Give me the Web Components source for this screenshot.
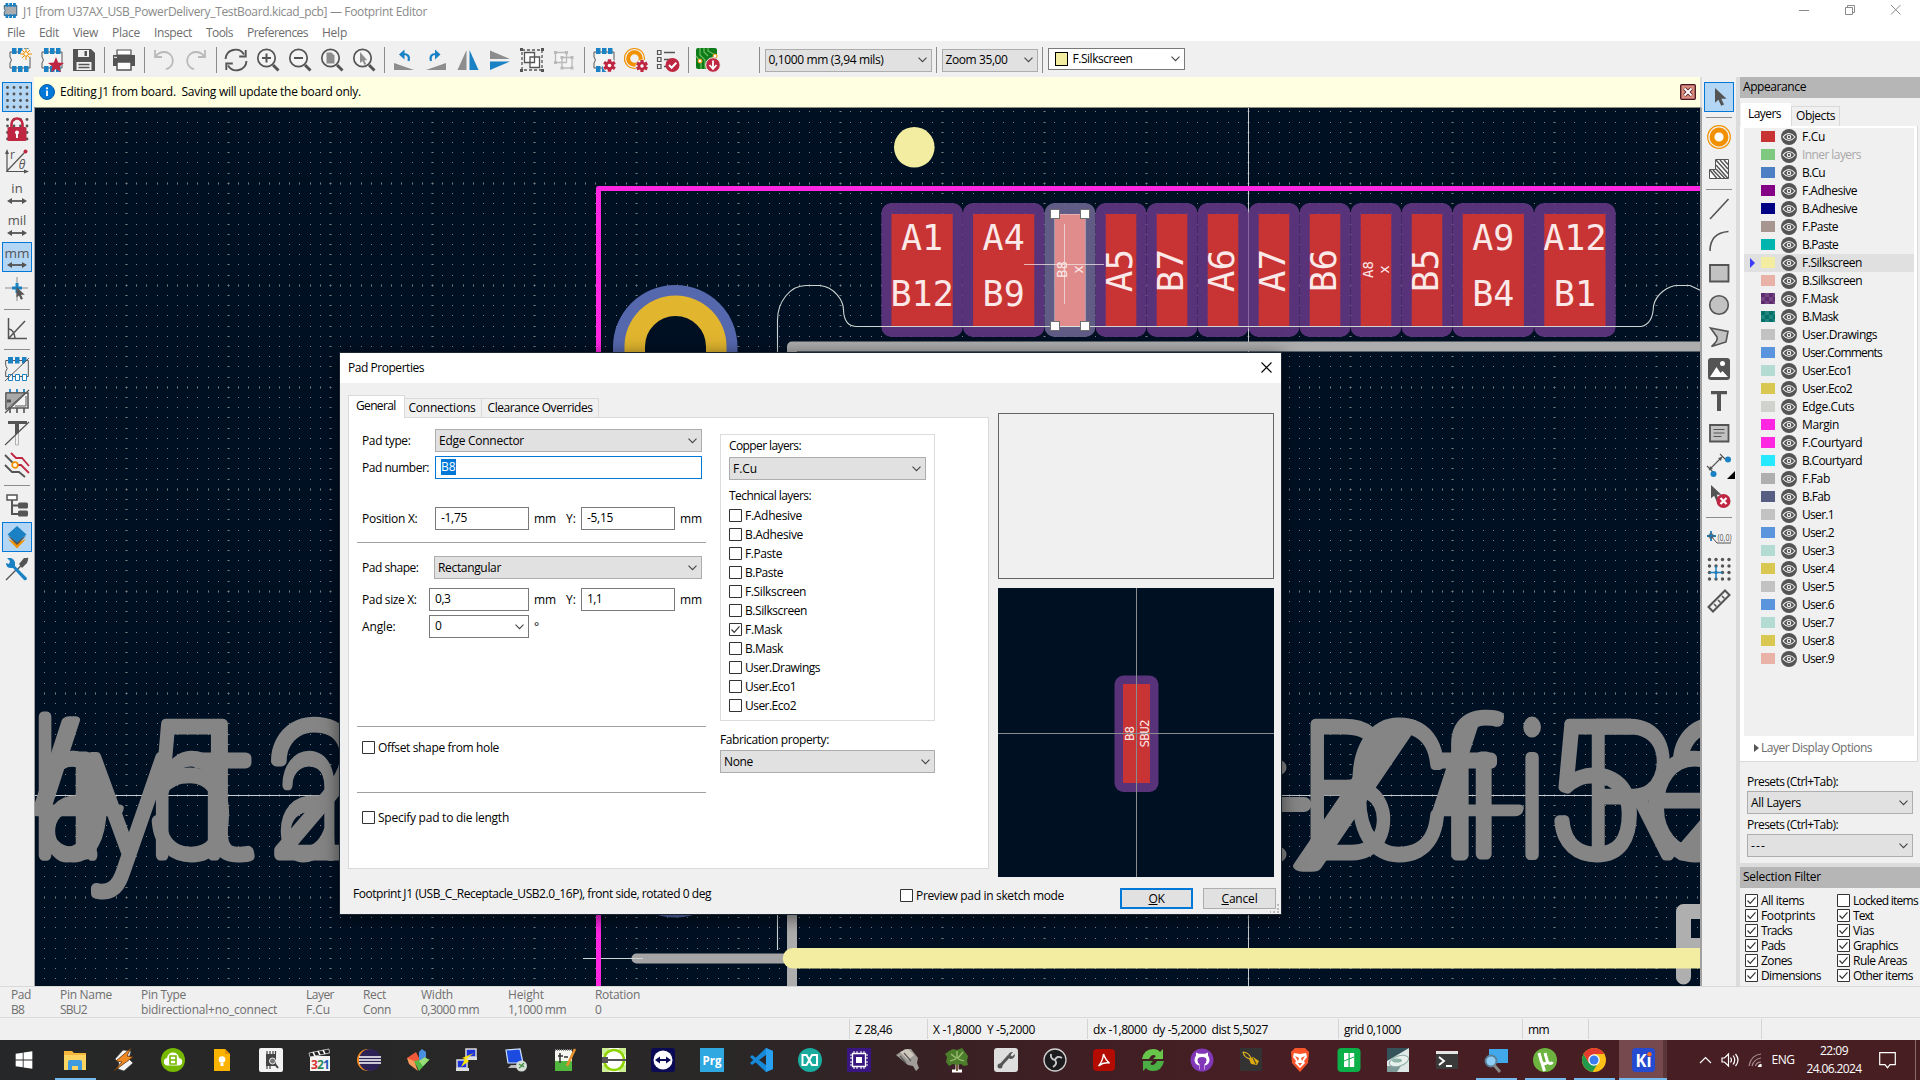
<!DOCTYPE html>
<html lang="en">
<head>
<meta charset="utf-8">
<title>Footprint Editor</title>
<style>
html,body{margin:0;height:100%;overflow:hidden;background:#f0f0f0}
body{font:12px/16px "Open Sans","Noto Sans",sans-serif;color:#000}
</style>
</head>
<body>
<fp-app></fp-app>
<script>
const el=(name,css,html,init)=>customElements.define(name,class extends HTMLElement{
  constructor(){super();this.attachShadow({mode:'open'})}
  connectedCallback(){
    if(this.done)return;this.done=true;
    this.shadowRoot.innerHTML='<style>*{box-sizing:border-box}'+css+'</style>'+(typeof html==='function'?html(this):html);
    if(init)init(this);
  }
});
const G='#545454',B='#1a81c4',R='#bf2641',O='#f29100';
const gear=(x,y,s=1)=>`<g transform="translate(${x} ${y}) scale(${s})"><path d="M0-6V6M-5.2-3L5.2 3M-5.2 3L5.2-3" stroke="${R}" stroke-width="3.2"/><circle r="4.3" fill="${R}"/><circle r="1.7" fill="#fff"/></g>`;
const chip=`<path d="M2 4h20v16H2v-5q3-3 0-6z" fill="#f4f4f4" stroke="${G}"/><path d="M4 0h4.500v6H4zM10 0h4.500v6H10zM16 0h4.500v6H16zM4 18h4.500v6H4zM10 18h4.500v6H10zM16 18h4.500v6H16z" fill="${B}"/>`;
const mag=i=>`<circle cx="10.500" cy="10" r="8.700" fill="#f4f4f4" stroke="${G}" stroke-width="1.700"/><path d="M17 17l5.500 5.500" stroke="${G}" stroke-width="3"/>${i}`;
const arr=`<path d="M5 20h14" stroke="${G}" stroke-width="1.800"/><path d="M2 20l5-3v6zM22 20l-5-3v6z" fill="${G}"/>`;
const dots=(r=1.4)=>{let s='';for(const y of[2.500,9,15.500,22])for(const x of[2.500,9,15.500,22])s+=`<circle cx="${x}" cy="${y}" r="${r}"/>`;return`<g fill="${G}">${s}</g>`};
const cur=(x,y,s)=>`<path transform="translate(${x} ${y}) scale(${s})" d="M0 0v14l3.300-2.800 2.600 5.800 2.700-1.200-2.600-5.600H11z" fill="${G}"/>`;
const T=(x,y,s,t,f='#545454',w=400,extra='')=>`<text x="${x}" y="${y}" font-size="${s}" fill="${f}" font-weight="${w}" text-anchor="middle" font-family="Open Sans,sans-serif" ${extra}>${t}</text>`;
const I={
newfp:chip+`<circle cx="18" cy="6" r="5.500" fill="#f0f0f0"/><path d="M18 0v12M12 6h12M14 2l8 8M22 2l-8 8" stroke="${O}" stroke-width="1"/><circle cx="18" cy="6" r="2.200" fill="#fff" stroke="${O}"/>`,
lib:chip+`<path d="M16 9l2.200 5.500 5.800.4-4.500 3.700 1.500 5.700-5-3.200-5 3.200 1.500-5.700L8 14.900l5.800-.4z" fill="${R}"/>`,
save:`<path d="M1 1h18l4 4v18H1z" fill="${G}"/><path d="M6 2h11v7H6zM4.500 14h15v8h-15z" fill="#f0f0f0"/><path d="M12.500 3h2.500v5h-2.500z" fill="${G}"/><path d="M6.500 16.500h11M6.500 19.500h11" stroke="${G}" stroke-width="1.300"/>`,
print:`<path d="M5 2h14v5H5z" fill="#fff" stroke="${G}" stroke-width="1.200"/><path d="M1 7h22v11H1z" fill="${G}"/><path d="M5 14h14v8H5z" fill="#fff" stroke="${G}" stroke-width="1.500"/><path d="M2 9.300h3" stroke="#fff"/>`,
undo:`<path d="M3 2v7h7M3.500 8.500Q7 4 12 4a8.700 8.700 0 0 1 2 17.200" fill="none" stroke="#b9b9b9" stroke-width="1.800"/>`,
redo:`<path d="M21 2v7h-7M20.500 8.500Q17 4 12 4a8.700 8.700 0 0 0-2 17.200" fill="none" stroke="#b9b9b9" stroke-width="1.800"/>`,
refresh:`<path d="M1.500 11A10 10 0 0 1 20 6.500M22.500 13A10 10 0 0 1 4 17.500" fill="none" stroke="${G}" stroke-width="1.900"/><path d="M21.700 2v6.500h-6.500M2.300 22v-6.500h6.500" fill="none" stroke="${G}" stroke-width="1.900"/>`,
zin:mag(`<path d="M10.500 5.500v9M6 10h9" stroke="${G}" stroke-width="2"/>`),
zout:mag(`<path d="M6 10h9" stroke="${G}" stroke-width="2"/>`),
zfit:mag(`<path d="M6.500 4.500h5l3 3v8h-8z" fill="#8d8d8d"/>`),
zsel:mag(`<path d="M8 4v11l2.500-2 2 4 1.700-1-2-3.700h3z" fill="#8d8d8d"/>`),
rotl:`<path d="M2 15l20 7H2z" fill="#8d8d8d"/><path d="M16.500 13Q18.500 6 11 6" fill="none" stroke="${B}" stroke-width="2.200"/><path d="M7 6.500l5.500-5v10z" fill="${B}"/>`,
rotr:`<path d="M22 15L2 22h20z" fill="#8d8d8d"/><path d="M7 13Q5 6 12 6" fill="none" stroke="${B}" stroke-width="2.200"/><path d="M16.500 6.500l-5.500-5v10z" fill="${B}"/>`,
mirh:`<path d="M10.500 2v20H1.500z" fill="#8d8d8d"/><path d="M13.500 2v20h9z" fill="${B}"/>`,
mirv:`<path d="M2 2.500v8.500h20z" fill="#8d8d8d"/><path d="M2 13.500v8.500l20-8.500z" fill="${B}"/>`,
grp:`<path d="M2 2h20v20H2z" fill="none" stroke="${G}" stroke-width="1.300" stroke-dasharray="3 2"/><path d="M4.500 4.500h10v10h-10zM10 9h9.500v10.500H10z" fill="#fff" stroke="${G}" stroke-width="1.300"/><path d="M0 0h3v3H0zM21 0h3v3h-3zM0 21h3v3H0zM21 21h3v3h-3z" fill="${G}"/>`,
ungrp:`<path d="M3.500 4.500h11v10h-11zM10 9.500h10v10.500H10z" fill="#f4f4f4" stroke="#b9b9b9" stroke-width="1.300"/><path d="M2 3h3v3H2zM13 3h3v3h-3zM2 13h3v3H2zM8.500 8h3v3h-3zM18.500 8h3v3h-3zM8.500 18.500h3v3h-3zM18.500 18.500h3v3h-3z" fill="#b9b9b9"/>`,
fpprop:chip+`<circle cx="17.500" cy="17.500" r="7" fill="#f0f0f0"/>`+gear(17.500,17.500,1.050),
padprop:`<circle cx="10.500" cy="10.500" r="10" fill="none" stroke="${O}" stroke-width="1.200"/><circle cx="10.500" cy="10.500" r="6.300" fill="none" stroke="${O}" stroke-width="4"/><circle cx="18" cy="18" r="6.500" fill="#f0f0f0"/>`+gear(18,18),
drc:`<path d="M1.500 2.500h3.500v4H1.500zM1.500 9.500h3.500v4H1.500zM1.500 16.500h3.500v4H1.500z" fill="none" stroke="${G}" stroke-width="1.200"/><path d="M8 4.500h11M8 11.500h7M8 18.500h2" stroke="${G}" stroke-width="1.300"/><circle cx="16.500" cy="17" r="7" fill="${R}"/><path d="M13 17l2.600 2.700 4.700-5" fill="none" stroke="#fff" stroke-width="2"/>`,
pcb:`<rect x="0" y="0" width="21" height="21" rx="2" fill="#0e7b1b"/><path d="M4 0v7l5 5v9M8 0v4l4 4M12 0v3l9 5M0 8l5 6v7" fill="none" stroke="#6cbf5b" stroke-width="1.200"/><circle cx="4" cy="13" r="2" fill="#fff" stroke="${O}"/><circle cx="19" cy="8" r="2" fill="#fff" stroke="${O}"/><circle cx="17" cy="17" r="7.300" fill="${R}" stroke="#f0f0f0"/><path d="M17 12.500v8M13.500 17l3.500 4 3.500-4" fill="none" stroke="#fff" stroke-width="1.800"/>`,
grid:dots(),
lock:dots()+`<path d="M6.500 13V7a5.500 5.500 0 0 1 11 0v6" fill="none" stroke="${R}" stroke-width="2.600"/><rect x="2.500" y="10" width="19" height="14" rx="1.500" fill="${R}"/><circle cx="12" cy="15.500" r="2" fill="#fff"/><path d="M12 16v5" stroke="#fff" stroke-width="2"/>`,
polar:`<path d="M2 23V3M1 22.500h21M2 22L20 3" fill="none" stroke="${G}" stroke-width="1.200"/><path d="M2 0L0 5h4zM24 22.500l-5-2v4z" fill="${G}"/><circle cx="20.500" cy="2.500" r="2" fill="${R}"/>`+T(7.500,10,12,'r')+T(17,19.500,12,'θ','#545454',400,'font-style="italic"'),
in:T(12,12,13,'in')+arr, mil:T(12,12,13,'mil')+arr, mm:T(12,13,13.500,'mm')+arr,
full:`<path d="M12 0v24M0 11h23" stroke="#8d8d8d" stroke-width="1"/><path d="M12 6v10M7 11h10" stroke="${B}" stroke-width="3"/>`+cur(11.500,10,.75),
ang:`<path d="M3.500 1v20.500H22M4 21L20 4M4 12q5 1 6 9" fill="none" stroke="${G}" stroke-width="1.500"/>`,
padsk:`<path d="M.7 3.500h22.600v16H.7v-5q3-3 0-6z" fill="none" stroke="${G}"/><path d="M3 0h5v6.500H3zM10 0h4.500v6.500H10zM17 0h4.500v4L19 6.500h-2z" fill="${B}"/><path d="M3.500 17.500h4v6h-4zM10.500 17.500h4v6h-4zM17.500 17.500h4v6h-4z" fill="#fff" stroke="${B}"/><path d="M0 24L24 1" stroke="${G}"/>`,
gfxsk:`<path d="M5 0v5M12 0v5M19 0v5" stroke="${B}" stroke-width="1.800"/><path d="M5 19v5M12 19v5M19 19v5" stroke="${G}" stroke-width="1.600"/><path d="M1 4h22v15H1z" fill="#f4f4f4" stroke="${G}" stroke-width="1.500"/><path d="M1 4h19L1 21z" fill="#a9a9a9" stroke="${G}"/><path d="M2 10.500h4v3H2z" fill="${G}"/><path d="M10 17h11V7" fill="none" stroke="${G}"/><path d="M0 24L24 1" stroke="${G}" stroke-width="1.200"/>`,
txtsk:`<path d="M10.500 12v12h3V10" fill="none" stroke="#b0b0b0"/><path d="M3 0h19v3h-8v8l-4 3V3H3z" fill="${G}"/><path d="M0 24L24 1" stroke="${G}" stroke-width="1.200"/>`,
contrast:`<path d="M0 2l8 8M0 12l7 7h7l6 5" fill="none" stroke="${G}" stroke-width="1.800"/><path d="M6 0l5 5h6l7 8M12 12h4l8 8" fill="none" stroke="${R}" stroke-width="1.800"/><circle cx="10" cy="12" r="2.800" fill="#fff" stroke="${O}" stroke-width="1.700"/>`,
tree:`<path d="M2 2h10v5H2z" fill="#fff" stroke="${G}" stroke-width="1.500"/><path d="M7 7v14h7M7 12.500h7" fill="none" stroke="${G}" stroke-width="2"/><rect x="13" y="9.500" width="10" height="6" rx="1.500" fill="${G}"/><rect x="13" y="17.500" width="10" height="6" rx="1.500" fill="${G}"/>`,
layers:`<path d="M3 14l9 9.500 9-9.500-9 4z" fill="${O}"/><path d="M3 11l9 9 9-9-9 4z" fill="${G}"/><path d="M12 1l9.500 8.500-9.500 8-9.500-8z" fill="${B}"/>`,
tools:`<path d="M23 1L12 13M12 12L1 23" stroke="${G}" stroke-width="1.400"/><path d="M14 7l5-6h3l1 2-1 3-5 5z" fill="${G}"/><path d="M2 1l3 3-1 3-3-1q0 5 5 5h2l11 12q3 1 3-2L10 9q1-6-4-8z" fill="${B}"/>`,
arrow:cur(8,3,1.050),
pad:`<circle cx="12" cy="12" r="11.300" fill="none" stroke="${O}" stroke-width="1.200"/><circle cx="12" cy="12" r="7" fill="#fff" stroke="${O}" stroke-width="4.800"/>`,
hatch:`<path d="M8.500 2.500h13v19H2.500v-9h6z" fill="#fff" stroke="${G}"/><path d="M9 3l12.500 14M9 8l12 13.500M13 3l8 9M17 3l4.500 5M3 13l7 8.500M6 13l8 8.500M9 12l9 9.500" stroke="${G}" stroke-width="1.500"/>`,
line:`<path d="M3 22L21.500 2" stroke="${G}" stroke-width="1.600"/>`,
arc:`<path d="M3 22Q3 4 21.500 2.500" fill="none" stroke="${G}" stroke-width="1.600"/>`,
rect:`<path d="M3 4h18.500v16.500H3z" fill="#c2c2c2" stroke="${G}" stroke-width="1.800"/>`,
circ:`<circle cx="12" cy="12" r="9.300" fill="#c2c2c2" stroke="${G}" stroke-width="1.600"/>`,
poly:`<path d="M3.500 3l17.500 3.500-2 10.500L4.500 21.500q7-6 5.500-9.500z" fill="#c2c2c2" stroke="${G}" stroke-width="1.600"/>`,
img:`<rect x="1" y="1" width="22" height="22" rx="3" fill="${G}"/><path d="M3 20l6.500-10 4 6 2-2 5.500 6z" fill="#fff"/><circle cx="15.500" cy="6.500" r="2.500" fill="#fff"/>`,
txt:`<path d="M4 2h16v3.200h-6V22h-4V5.200H4z" fill="${G}"/>`,
tbox:`<path d="M3 4h18.500v16.500H3z" fill="#c2c2c2" stroke="${G}" stroke-width="1.800"/><path d="M6.500 8.500h11M6.500 12h11M6.500 15.500h8" stroke="${G}" stroke-width="1.200"/>`,
dim:`<path d="M2 17L15 4M0 13l7 7M13 1l7 7" stroke="${G}" stroke-width="1.100"/><path d="M15 4l-4 1 3 3zM2 17l4-1-3-3z" fill="${G}"/><circle cx="21" cy="6.500" r="3" fill="${B}"/><circle cx="6.500" cy="21" r="3" fill="${B}"/>`,
del:cur(4,0,.95)+`<circle cx="16.500" cy="16" r="7" fill="${R}"/><path d="M13.500 13l6 6M19.500 13l-6 6" stroke="#fff" stroke-width="2.200"/>`,
orig:`<path d="M4 6v10M0 11h9" stroke="${B}" stroke-width="1.800"/><path d="M4 11l6 7h14" fill="none" stroke="${G}"/><circle cx="4" cy="11" r="2.300" fill="none" stroke="${G}"/>`+T(17.5,15.500,9,'(0,0)','#545454',400,'textLength="14" lengthAdjust="spacingAndGlyphs"'),
gorig:dots(1.700)+`<path d="M9 9v13M2.500 15.500h13" stroke="${B}" stroke-width="1.500"/>`,
ruler:`<path d="M1.500 18L18 1.500 22.500 6 6 22.500z" fill="none" stroke="${G}" stroke-width="2"/><path d="M7 15l2.500 2.500M11 11l2.500 2.500M15 7l2.500 2.500" stroke="${G}" stroke-width="1.500"/>`,
app:`<path d="M2 4h20v16H2v-5q3-3 0-6z" fill="#a9adb0" stroke="#2b5876" stroke-width="1.500"/><path d="M4 0h4.500v6H4zM10 0h4.500v6H10zM16 0h4.500v6H16zM4 18h4.500v6H4zM10 18h4.500v6H10zM16 18h4.500v6H16z" fill="${B}"/>`,
eye:`<circle cx="12" cy="12" r="12" fill="${G}"/><path d="M3 12q9-10.500 18 0q-9 10.500-18 0z" fill="none" stroke="#f4f4f4" stroke-width="1.700"/><circle cx="12" cy="12" r="2.600" fill="none" stroke="#f4f4f4" stroke-width="1.700"/>`,
/* taskbar */
win:`<path d="M2 4.500l8.500-1.200v8.200H2zM11.500 3.100L22 1.500v10H11.500zM2 12.500h8.500v8.200L2 19.500zM11.500 12.500H22v10l-10.500-1.600z" fill="#fff"/>`,
expl:`<path d="M1 3h8l2 2h12v17H1z" fill="#f2b73b"/><path d="M1 7h22v15H1z" fill="#fcd462"/><path d="M5 22v-8q0-2 2-2h10q2 0 2 2v8h-4v-4H9v4z" fill="#3f9be0"/>`,
winamp:`<path d="M11 2l8 1-2 8 4 4-9 8-6-2 1-6-4-4z" fill="#f4f4f4" stroke="#333" stroke-width=".6"/><path d="M19 0L4 13l6 1-8 9L21 9l-6-1z" fill="#f08a24" stroke="#5a3510" stroke-width=".8"/>`,
cloud:`<circle cx="12" cy="12" r="12" fill="#76b900"/><path d="M6 17.500a3.800 3.800 0 0 1 0-7.500q1-5.500 6-5.500t6 5.500a3.800 3.800 0 0 1 0 7.500z" fill="#fff"/><path d="M9 8h6v8H9zM9 12h6" fill="none" stroke="#76b900" stroke-width="1.600"/>`,
keep:`<path d="M4 1h11l5 5v17H4z" fill="#fbb300"/><path d="M15 1l5 5h-5z" fill="#e09000"/><circle cx="12" cy="11.500" r="3.300" fill="#fff"/><path d="M10.500 15h3v3h-3z" fill="#fff"/>`,
chipq:`<rect width="24" height="24" rx="2" fill="#f3f3f3"/><path d="M7 6h10v12H7z" fill="#444"/><path d="M8 3v3M11 3v3M14 3v3M16.500 3v3M8 18v3M11 18v3" stroke="#444" stroke-width="1.200"/><circle cx="13.500" cy="13" r="3" fill="#777" stroke="#eee"/><path d="M16 16l3 4" stroke="#444" stroke-width="2"/>`,
mpc:`<path d="M2 8h20v15H2z" fill="#f4f4f4"/><path d="M1 5l20-4 .5 4L2 9z" fill="#222" stroke="#ddd" stroke-width=".8"/><path d="M5 4l2 4M10 3l2 4M15 2l2 4" stroke="#fff" stroke-width="1.600"/>`+T(6.500,20.500,12,'3','#d33',700)+T(12.500,20.500,12,'2','#2a8a5a',700)+T(18.500,20.500,12,'1','#235ab8',700),
eclipse:`<circle cx="11" cy="12" r="11" fill="#f58a1f"/><circle cx="13" cy="12" r="11" fill="#2c2255"/><path d="M2 9h22M2 12h22M2 15h22" stroke="#fff" stroke-width="1.500"/>`,
cube:`<path d="M1 10l9-6 4 8-6 6z" fill="#f1593a"/><path d="M13 4l3-3 4 3v5l-7 5z" fill="#4a90e2"/><path d="M1 10l7 3 4 10-9-7z" fill="#f79a5b"/><path d="M8 13l6-1 10-1-11 12z" fill="#58b947"/><path d="M13 13l6-4 4 3-6 6z" fill="#9bdc7a"/>`,
putty:`<path d="M11 1h10v8H11zM2 12h10v8H2z" fill="#1b33d8" stroke="#ddd" stroke-width="1.500"/><path d="M9 9h13v3H11zM1 20h13v3H1z" fill="#ddd"/><path d="M19 5l-8 6 3 2-8 6 4-8-3-1z" fill="#ffe600"/>`,
rdp:`<path d="M2 2l14-1 3 14H4z" fill="#1b4be0" stroke="#cfe0ff" stroke-width="1.200"/><path d="M7 17h10v3H4z" fill="#bbb"/><circle cx="17.500" cy="18" r="5.500" fill="#d7ded7"/><path d="M15 16l3 2-3 2M20 15l-2 2 2 2" fill="none" stroke="#3f8f3f" stroke-width="1.200"/>`,
npp:`<path d="M2 2h17v21H2z" fill="#f6f6f0"/><path d="M2 13h17v10H2z" fill="#4fb83d"/><path d="M2 2h17" stroke="#888" stroke-width="2" stroke-dasharray="1 1"/><path d="M5 8h5M7 5v10M11 9h4" stroke="#333" stroke-width="1.500"/><path d="M22 1l-8 17" stroke="#e8912d" stroke-width="2.500"/>`,
lime:`<path d="M0 0h24v24H0z" fill="#fff"/><path d="M0 0h7v7H0zM17 0h7v7h-7zM0 17h7v7H0zM17 17h7v7h-7z" fill="#9be22e" opacity=".5"/><circle cx="12" cy="12" r="10" fill="#fff" stroke="#8fd400" stroke-width="2.600"/><path d="M0 9h6v2h18v2H6v2H0z" fill="#555"/>`,
tv:`<rect width="24" height="24" rx="3" fill="#0a0a55"/><circle cx="12" cy="12" r="9.500" fill="#fff"/><path d="M4 12l5-3.500V11h6V8.500l5 3.500-5 3.500V13H9v2.500z" fill="#0a0a55"/>`,
prg:`<rect width="24" height="24" fill="#2fa7e0"/>`+T(12,16.500,12,'Prg','#fff',700,'textLength="19" lengthAdjust="spacingAndGlyphs"'),
vsc:`<path d="M17 0l7 3v18l-7 3L1 9l2-2 14 10V7L3 17l-2-2z" fill="#1689d8"/><path d="M17 0l7 3v18l-7 3z" fill="#2aa0f0"/>`,
lxi:`<circle cx="12" cy="12" r="12" fill="#1aab9f"/><path d="M4.500 7v10h4L14 7h5v10h-5L8.500 7z" stroke="#fff" stroke-width="2" fill="none"/>`,
cpu:`<rect width="24" height="24" fill="#3a1680"/><path d="M7 3v18M10 3v18M14 3v18M17 3v18M3 7h18M3 10h18M3 14h18M3 17h18" stroke="#fff" stroke-width="1"/><path d="M5.500 5.500h13v13h-13z" fill="#3a1680" stroke="#fff" stroke-width="1.300"/><path d="M9 9h6v6H9z" fill="#fff"/>`,
conn:`<path d="M0 7l9-6h6l7 9-1 5 2 5-3 3-3-5-5-1z" fill="#a09c98"/><path d="M4 4l8-3 6 6-6 5z" fill="#cfc8bd"/><path d="M4 8l6 7M8 5l7 8" stroke="#5f5f5f" stroke-width="1.300"/>`,
treei:`<path d="M12 23V12M7 23h10" stroke="#fff" stroke-width="3"/><path d="M12 23V12" stroke="#6b4a2a" stroke-width="1.800"/><path d="M4 3l4-2 4 1 5-2 3 4 3 4-1 5 1 4-4 1-3-2-4 1-4-1-4 2-3-4 1-5-2-3z" fill="#4c7d2b"/><path d="M6 6l5 4M18 4l-5 6M5 13l6-2M19 13l-6-2M12 3v8" stroke="#a0c274" stroke-width="1.300"/>`,
wrench:`<rect width="24" height="24" rx="3" fill="#dedede"/><path d="M6 18L15 8" stroke="#555" stroke-width="3"/><path d="M14 9q0-5 5-5l-2.500 3 1.500 1.500L21 6q0 5-5 5z" fill="#555"/><circle cx="6" cy="18" r="2.500" fill="#555"/>`,
obs:`<circle cx="12" cy="12" r="11" fill="#1c1c1e" stroke="#d0d0d0" stroke-width="1.300"/><path d="M12 12q-5-1-4-6M12 12q3 4-2 7M12 12q2-5 7-2" fill="none" stroke="#c9c9c9" stroke-width="1.900"/>`,
pdf:`<rect x="1" y="1" width="22" height="22" rx="4" fill="#b30b00"/><path d="M11.500 6q2 6 6 9-6-1-11 3 4-4 5-12z" fill="none" stroke="#fff" stroke-width="1.400"/>`,
sync:`<path d="M1 11Q3 1 12 1q5 0 7 3l3-3v10h-10l3-3q-4-3-7 3z" fill="#67c64a"/><path d="M23 13q-2 10-11 10-5 0-7-3l-3 3v-10h10l-3 3q4 3 7-3z" fill="#4aae45"/>`,
gh:`<circle cx="12" cy="12" r="11.500" fill="#8137b8"/><path d="M9 21.500v-4q-4-1-4.500-5 0-3 1.500-5V4.500l3 1.300h6l3-1.300v3q1.500 2 1.500 5-.5 4-4.500 5v4z" fill="#fff"/><path d="M9.500 22v-6q-2-1-2-4t4.500-3 4.500 3-2 4v6z" fill="#8137b8"/>`,
bee:`<rect x="1" width="22" height="23" fill="#333"/><path d="M4 4q7 1 8 7M4 4q1 6 8 7" fill="none" stroke="#e8b81e" stroke-width="1.200"/><path d="M10 11l4-2 6 4-2 4-6-1z" fill="#d9a90f"/><path d="M14 10l3 6" stroke="#333"/>`,
brave:`<path d="M7 0h10l4 4-1 11-8 9-8-9L3 4z" fill="#fb542b"/><path d="M6 5l6 1 6-1 1 4-3 4 1 2-5 5-5-5 1-2-3-4z" fill="#fff"/><path d="M7 8l4 2-1 3zM17 8l-4 2 1 3zM10 15h4l-2 3z" fill="#fb542b"/>`,
green:`<rect x=".5" width="23" height="24" rx="4" fill="#0bb049"/><path d="M7 5h4.500v14H7zM12.700 5h4.500v14h-4.500z" fill="#fff"/><path d="M7 13l10-4" stroke="#0bb049"/>`,
sat:`<path d="M1 0h22v24H1z" fill="#dfe8e6"/><path d="M1 0h22L1 13z" fill="#35535b"/><path d="M1 18h14l-4 6H1z" fill="#7d9a98"/><ellipse cx="13" cy="13" rx="10" ry="5" transform="rotate(-18 13 13)" fill="#e9f1ef" stroke="#8fada6"/><ellipse cx="11" cy="12.500" rx="5" ry="2" fill="#8fb5a8"/>`,
term:`<path d="M1 3h22v18H1z" fill="#3a3a3a"/><path d="M1 3h22v3H1z" fill="#e4e4e4"/><path d="M4 9l5 4-5 4M11 18h6" fill="none" stroke="#fff" stroke-width="1.900"/>`,
view:`<path d="M5 1h19v14H5z" fill="#41a8ec"/><circle cx="7" cy="13" r="5.500" fill="#8fcdf5" stroke="#5a7f96" stroke-width="1.800"/><path d="M10 17l6 7" stroke="#8a8a8a" stroke-width="2.800"/>`,
ut:`<circle cx="12" cy="12" r="12" fill="#6cb33f"/><path d="M6 5l2.500 9q3 3.500 6 0L12 5M14.500 14q3 3 5 0M9 15l2.500 8" fill="none" stroke="#fff" stroke-width="3"/>`,
chrome:`<circle cx="12" cy="12" r="12" fill="#fbc116"/><path d="M1.600 6A12 12 0 0 1 22.400 6H12z" fill="#e33b2e"/><path d="M1.600 6A12 12 0 0 0 10.500 23.900L16 15l-9 0z" fill="#229a4c"/><path d="M1.600 6L7 15l5-9z" fill="#e33b2e"/><circle cx="12" cy="12" r="5.800" fill="#fff"/><circle cx="12" cy="12" r="4.500" fill="#3b7ded"/>`,
ki:`<rect x="1" width="23" height="24" rx="4" fill="#244bd0"/>`+T(12.500,19,18.500,'Ki','#fff',700,'textLength="16" lengthAdjust="spacingAndGlyphs"')+`<circle cx="18.500" cy="6.200" r="2.200" fill="#f26a21"/>`
};
el('kc-icon',':host{display:block;flex:none;width:24px;height:24px}svg{display:block;width:100%;height:100%;overflow:visible}',e=>`<svg viewBox="0 0 24 24">${I[e.getAttribute('name')]||''}</svg>`);

/* A label whose letter spacing is tuned to fill the width given in w */
el('fit-text',':host{display:inline-block;white-space:pre;flex:none}span{display:inline-block}','<span><slot></slot></span>',e=>{
  const w=+e.getAttribute('w');if(!w)return;
  const s=e.shadowRoot.querySelector('span'),n=e.textContent.length,nat=s.getBoundingClientRect().width;
  if(nat)s.style.letterSpacing=((w-nat)/n).toFixed(3)+'px';
  e.style.width=w+'px';
});
el('tool-btn',':host{display:flex;flex:none;width:32px;height:32px;align-items:center;justify-content:center}div{display:flex;width:30px;height:30px;align-items:center;justify-content:center;position:relative}:host([on]) div{background:#b3d6f4;border:1px solid #0078d7}i{position:absolute;border:4px solid;border-color:transparent #000 #000 transparent;right:-1px;bottom:1px}',e=>`<div><kc-icon name="${e.getAttribute('icon')}"></kc-icon>${e.hasAttribute('more')?'<i></i>':''}</div>`);
el('tool-sep',':host{display:flex;flex:none;align-items:center;justify-content:center;width:8px;height:26px}:host([h]){width:26px;height:8px}i{width:1px;height:26px;background:#8c8c8c}:host([h]) i{width:26px;height:1px}','<i></i>');
el('tool-strip',':host{display:flex;flex-direction:column;align-items:center;background:#f0f0f0;padding-top:4px;width:34px;flex:none}',e=>e.getAttribute('items').split(' ').map(n=>n==='|'?'<tool-sep h></tool-sep>':`<tool-btn icon="${n.replace(/[*+]/,'')}" ${n.endsWith('*')?'on':''} ${n.endsWith('+')?'more':''}></tool-btn>`).join(''));
el('win-select',':host{display:flex;flex:none;height:23px;border:1px solid #adadad;background:#e1e1e1;align-items:center;padding:0 4px 0 3px;justify-content:space-between}:host([edit]){background:#fff;border-color:#7a7a7a;padding-left:5px}:host([edit]) div{margin-top:-2px}div{display:flex;align-items:center;gap:8px}svg{flex:none;width:9px;height:6px}','<div><slot></slot></div><svg viewBox="0 0 9 6"><path d="M.5.7l4 4 4-4" fill="none" stroke="#444" stroke-width="1.100"/></svg>');
el('win-input',':host{display:block;flex:none;height:23px;border:1px solid #7a7a7a;background:#fff;padding:2px 5px}:host([focus]){border-color:#0078d7}:host([focus]) span{background:#0078d7;color:#fff;display:inline-block;line-height:16px;height:16px;overflow:hidden}','<span><slot></slot></span>');
el('win-check',':host{display:flex;flex:none;align-items:center;gap:3px;height:13px}svg{width:13px;height:13px;flex:none}',e=>`<svg viewBox="0 0 13 13"><path d="M.5.5h12v12H.5z" fill="#fff" stroke="#333"/>${e.hasAttribute('on')?'<path d="M2.500 6.500l2.700 2.800 5.300-6" fill="none" stroke="#333" stroke-width="1.200"/>':''}</svg><slot></slot>`);
el('layer-row',':host{display:flex;height:18px;align-items:center;padding-left:17px;position:relative}:host([sel]){background:#e0e0e0}b{width:14px;height:11px;margin-right:6px;margin-top:-2px}b.k{background-image:conic-gradient(rgba(255,255,255,.13) 25%,transparent 0 50%,rgba(255,255,255,.13) 0 75%,transparent 0)!important;background-size:8px 8px!important}kc-icon{width:16px;height:16px}fit-text{margin-left:5px}:host([dim]){color:#a8a8a8}u{position:absolute;left:6px;top:4px;border:5px solid transparent;border-left-color:#3b3bff;border-right:0}',e=>`${e.hasAttribute('sel')?'<u></u>':''}<b class="${/Mask/.test(e.getAttribute('t'))?'k':''}" style="background-color:${e.getAttribute('c')}"></b><kc-icon name="eye"></kc-icon><fit-text w="${e.getAttribute('w')}">${e.getAttribute('t')}</fit-text>`);

/* Drawing area */
const OX=1248.500,OY=795.400,MM=102;
function gridDots(){
  let d='',m='';
  for(let k=-9;k<156;k++){const x=Math.floor(126.500+10.2*k);if(x<36||x>1699)continue;
    for(let j=-28;j<60;j++){const y=Math.floor(387.300+10.2*j);if(y<109||y>984)continue;
      const a=k%10===0,b=j%10===0;
      d+=`M${x} ${y}h1v1h-1z`;
      if(a)m+=`M${x-1} ${y}h3v1h-3z`;
      if(b)m+=`M${x} ${y-1}h1v3h-1z`;}}
  return`<g shape-rendering="crispEdges"><path d="${m}" fill="#454d57"/><path d="${d}" fill="#7c8085"/></g>`;
}
function pads(){
  const P=[[-3.2,.6,'A1','B12'],[-2.4,.6,'A4','B9'],[-1.750,.3,'B8','x',1],[-1.250,.3,'A5'],[-.750,.3,'B7'],[-.250,.3,'A6'],[.25,.3,'A7'],[.75,.3,'B6'],[1.250,.3,'A8','x'],[1.750,.3,'B5'],[2.400,.6,'A9','B4'],[3.200,.6,'A12','B1']];
  let m='',c='',t='';
  for(const[x,w,a,b,sel]of P){const cx=OX+x*MM,pw=w*MM;
    m+=`<rect x="${cx-pw/2-10.2}" y="203" width="${pw+20.4}" height="134" rx="10.200" fill="${sel?'#716a96':'#683989'}" opacity=".85"/>`;
    c+=`<rect x="${cx-pw/2}" y="214" width="${pw}" height="112" fill="${sel?'#e08b8c':'#c83434'}"/>`;
    if(w>.5){t+=`<text x="${cx}" y="249.700">${a}</text><text x="${cx}" y="305.700">${b}</text>`}
    else if(b){t+=`<text font-size="14" transform="translate(${cx-3.500} 269.500) rotate(-90)">${a}</text><text font-size="14" transform="translate(${cx+12.500} 269.500) rotate(-90)">${b}</text>`}
    else t+=`<text font-size="36" transform="translate(${cx+11} 270.500) rotate(-90)">${a}</text>`;
  }
  return{m,c,t:`<g font-family="DejaVu Sans Mono,monospace" font-size="35" fill="#fbe9e9" text-anchor="middle">${t}</g>`};
}
function bigText(){
  const L=[['b',31,80],['a',44,58],['y',88,80],['5',142,90],['n',148,80],['t',194,62],['a',279,62],['2',266,100],
    ['B',1300,94],['/',1296,124,1],['C',1346,104],['f',1432,64],['i',1516,32],['5',1544,96],['R',1582,98],['e',1646,92],['2',1668,100]];
  const angled=x=>`<text transform="translate(${x} 811.500) skewX(-18) scale(1.080 .70)" x="0" y="0" stroke-width="12">L</text><text x="${x+46}" y="854">ı</text>`;
  return`<g font-family="Roboto,sans-serif" font-weight="100" font-size="184" fill="#858585" stroke="#858585" stroke-width="11" stroke-linejoin="round" stroke-linecap="round">${L.map(([c,x,w])=>`<text x="${x}" y="855" textLength="${w}" lengthAdjust="spacingAndGlyphs">${c}</text>`).join('')}${angled(19)}${angled(1419)}</g>`;
}
el('pcb-canvas',':host{display:block;flex:1;background:#001023;overflow:hidden;border-left:1px solid #a0a0a0;border-right:2px solid #a0a0a0}svg{display:block}',()=>{const p=pads();return`<svg width="1665" height="878" viewBox="35 108 1665 878">
<rect x="35" y="108" width="1665" height="878" fill="#001023"/>${gridDots()}
<path d="M35 795.500H1700M1248.500 108V986" stroke="#c8cbce" stroke-width="1"/>
<rect x="613" y="285" width="124.500" height="200" rx="62" fill="#5668ad"/><rect x="624.500" y="295.500" width="102" height="180" rx="51" fill="#e2b52f"/><rect x="645" y="316" width="61" height="140" rx="30.500" fill="#001023"/>
<rect x="613" y="700" width="124.500" height="217.500" rx="62" fill="#5668ad"/>
<path d="M792 990V346.500H1702" fill="none" stroke="#adadad" stroke-width="10" stroke-linejoin="round"/>
<path d="M636.500 958.500H790" stroke="#a5a5a5" stroke-width="10" stroke-linecap="round"/>
${p.m}${p.c}
<g fill="none" stroke="#cfd6d2" stroke-width="1.100"><path d="M777.500 950V320C777.500 302 790 285.500 806 285.500H820C834 287 843.500 300 843.500 310Q844 326.500 857 326.500H1641Q1653 324 1653.500 306C1656 294 1668 285.500 1678 285.500H1690L1702 291"/><path d="M583 958.500h60"/></g>
${p.t}
<path d="M1024 264.500h80M1064.500 224v80" stroke="#f3e3e3" stroke-width="1" opacity=".75"/>
<rect x="1054.500" y="214.500" width="31" height="112" fill="none" stroke="#fff" stroke-width=".6" opacity=".5"/>
${[[1055,214],[1085,214],[1055,326],[1085,326]].map(([x,y])=>`<rect x="${x-4.500}" y="${y-4.500}" width="9" height="9" fill="#fff" stroke="#707070"/>`).join('')}
<circle cx="914.300" cy="147.300" r="20.300" fill="#f2eda1"/>
${bigText()}
<g fill="none" stroke="#afafaf" stroke-width="15" stroke-linejoin="round" stroke-linecap="round"><path d="M1683.500 977V911.500H1710M1683.500 945.500H1710"/></g>
<g stroke="#858585" stroke-width="15" stroke-linecap="round"><path d="M1270 767.500h9M1270 854.500h9M1270 804.500h34"/></g>
<path d="M793 958.300H1710" stroke="#f2eda1" stroke-width="20.500" stroke-linecap="round"/>
<path d="M598.500 990V188.500H1702" fill="none" stroke="#ff26e2" stroke-width="5" stroke-linejoin="round"/>
</svg>`});

el('pad-dialog',`:host{display:flex;flex-direction:column;position:absolute;left:340px;top:353px;width:941px;height:561px;background:#f0f0f0;box-shadow:0 0 0 1px #1a2733,0 3px 16px 2px rgba(0,0,0,.5)}
header{display:flex;justify-content:space-between;align-items:center;height:30px;background:#fff;padding:0 9px 0 8px}header svg{width:11px;height:11px;margin-top:-2px}
main{display:flex;padding:12px 7px 0 8px;gap:9px;height:494px}
.nb{width:641px;display:flex;flex-direction:column;height:474px}.tabs{display:flex;align-items:flex-end;height:23px;margin-bottom:-1px;z-index:1}
.tab{border:1px solid #d9d9d9;border-left:0;height:20px;padding:1px 5px 0 4px;background:#f0f0f0}.tab+.tab+.tab{padding-left:6px}.tab.on{background:#fff;height:23px;border-left:1px solid #d9d9d9;border-bottom:0;padding:2px 8px 0 7px}
.page{flex:1;border:1px solid #d9d9d9;background:#fff;display:flex;padding:0 0 0 8px}
.form{width:349px}.row{display:flex;align-items:center;padding-left:5px}.row>.l{width:var(--l,73px);flex:none}hr{border:0;height:1px;background:#a0a0a0;margin:0}.row .u{margin-left:5px}.row .y{margin-left:10px;margin-right:5px}
.right{margin-left:14px;width:215px;padding-top:16px}.grp{border:1px solid #dcdcdc;height:287px;padding:3px 8px;display:flex;flex-direction:column}.grp win-check{margin-bottom:6px}
.prev{width:276px;display:flex;flex-direction:column;padding-top:18px;gap:9px}.b1{border:1px solid #646464;height:166px}.b2{height:289px;background:#001023}
footer{display:flex;align-items:center;height:37px;padding-left:13px;position:relative}footer fit-text{margin-top:-3px}footer win-check{margin-left:189px}footer win-check fit-text{margin-top:0}
.btn fit-text{margin-top:0}.btn{border:1px solid #adadad;background:#e1e1e1;height:21px;width:73px;display:flex;align-items:center;justify-content:center;margin-left:10px;margin-top:6px}.btn.d{border:2px solid #0078d7;margin-left:56px}.g{position:absolute;right:2px;bottom:1px;width:9px;height:9px}`,
`<header><fit-text w="76">Pad Properties</fit-text><svg viewBox="0 0 11 11"><path d="M.5.5l10 10M10.500.5l-10 10" stroke="#000" stroke-width="1.100"/></svg></header>
<main><div class="nb"><div class="tabs"><div class="tab on"><fit-text w="39.500">General</fit-text></div><div class="tab"><fit-text w="67">Connections</fit-text></div><div class="tab"><fit-text w="105">Clearance Overrides</fit-text></div></div>
<div class="page"><div class="form">
<div class="row" style="margin-top:11px"><div class="l"><fit-text w="48.500">Pad type:</fit-text></div><win-select style="width:267px"><fit-text w="85">Edge Connector</fit-text></win-select></div>
<div class="row" style="margin-top:4px"><div class="l"><fit-text w="67">Pad number:</fit-text></div><win-input focus style="width:267px"><fit-text w="14.500">B8</fit-text></win-input></div>
<div class="row" style="margin-top:28px"><div class="l"><fit-text w="55.500">Position X:</fit-text></div><win-input style="width:94px"><fit-text w="26">-1,75</fit-text></win-input><fit-text class="u" w="22">mm</fit-text><fit-text class="y" w="10">Y:</fit-text><win-input style="width:94px"><fit-text w="26">-5,15</fit-text></win-input><fit-text class="u" w="22">mm</fit-text></div>
<hr style="margin-top:12px">
<div class="row" style="margin-top:13px;--l:72px"><div class="l"><fit-text w="56.500">Pad shape:</fit-text></div><win-select style="width:268px"><fit-text w="63">Rectangular</fit-text></win-select></div>
<div class="row" style="margin-top:9px;--l:67px"><div class="l"><fit-text w="54.500">Pad size X:</fit-text></div><win-input style="width:100px"><fit-text w="15.500">0,3</fit-text></win-input><fit-text class="u" w="22">mm</fit-text><fit-text class="y" w="10">Y:</fit-text><win-input style="width:94px"><fit-text w="15">1,1</fit-text></win-input><fit-text class="u" w="22">mm</fit-text></div>
<div class="row" style="margin-top:4px;--l:67px"><div class="l"><fit-text w="33.500">Angle:</fit-text></div><win-select edit style="width:100px">0</win-select><span class="u">°</span></div>
<hr style="margin-top:88px">
<div class="row" style="margin-top:14px"><win-check><fit-text w="121">Offset shape from hole</fit-text></win-check></div>
<hr style="margin-top:38px">
<div class="row" style="margin-top:18px"><win-check><fit-text w="131">Specify pad to die length</fit-text></win-check></div>
</div>
<div class="right"><div class="grp"><fit-text w="72">Copper layers:</fit-text><win-select style="margin-top:3px;width:197px"><fit-text w="24">F.Cu</fit-text></win-select><fit-text w="82" style="margin:8px 0 5px">Technical layers:</fit-text>
<win-check><fit-text w="57">F.Adhesive</fit-text></win-check><win-check><fit-text w="58">B.Adhesive</fit-text></win-check><win-check><fit-text w="37">F.Paste</fit-text></win-check><win-check><fit-text w="38">B.Paste</fit-text></win-check><win-check><fit-text w="61">F.Silkscreen</fit-text></win-check><win-check><fit-text w="62">B.Silkscreen</fit-text></win-check><win-check on><fit-text w="37">F.Mask</fit-text></win-check><win-check><fit-text w="38">B.Mask</fit-text></win-check><win-check><fit-text w="75">User.Drawings</fit-text></win-check><win-check><fit-text w="51">User.Eco1</fit-text></win-check><win-check><fit-text w="51">User.Eco2</fit-text></win-check></div>
<fit-text w="109" style="margin:11px 0 2px">Fabrication property:</fit-text><win-select style="width:215px"><fit-text w="29">None</fit-text></win-select></div>
</div></div>
<div class="prev"><div class="b1"></div><div class="b2"><svg width="276" height="289" viewBox="998 588 276 289"><rect x="1114.500" y="675.500" width="44" height="116.500" rx="9" fill="#58337a"/><rect x="1123" y="684" width="27" height="99" fill="#c83434"/><g font-family="DejaVu Sans Mono,monospace" font-size="12.500" fill="#fbe9e9" text-anchor="middle"><text transform="translate(1134 733.500) rotate(-90)">B8</text><text transform="translate(1148.500 733.500) rotate(-90)" textLength="28">SBU2</text></g><path d="M1136.500 588v289M998 733.500h276" stroke="#8a8d90"/></svg></div></div></main>
<footer><fit-text w="358">Footprint J1 (USB_C_Receptacle_USB2.0_16P), front side, rotated 0 deg</fit-text><win-check><fit-text w="148">Preview pad in sketch mode</fit-text></win-check><div class="btn d"><fit-text w="16"><u>O</u>K</fit-text></div><div class="btn"><fit-text w="36"><u>C</u>ancel</fit-text></div><svg class="g" viewBox="0 0 9 9"><path d="M7 0h2v2H7zM7 4h2v2H7zM3 7h2v2H3zM7 7h2v2H7zM0 7h1v2H0z" fill="#bcbcbc"/></svg></footer>`);

const LAY=[['#c83434','F.Cu',23],['#7fc87f','Inner layers',59],['#4d7fc4','B.Cu',23],['#840084','F.Adhesive',55],['#000084','B.Adhesive',55],['#a6968f','F.Paste',36],['#00b5ae','B.Paste',36],['#f2eda1','F.Silkscreen',60],['#e8b2a7','B.Silkscreen',60],['#5e2b6e','F.Mask',36],['#02716a','B.Mask',36],['#c2c2c2','User.Drawings',75],['#5994dc','User.Comments',80],['#b4dbd2','User.Eco1',50],['#d8c852','User.Eco2',50],['#d0d2cd','Edge.Cuts',52],['#ff26e2','Margin',37],['#ff26e2','F.Courtyard',60],['#26e9ff','B.Courtyard',60],['#afafaf','F.Fab',28],['#585d84','B.Fab',28],['#c2c2c2','User.1',32],['#5994dc','User.2',32],['#b4dbd2','User.3',32],['#d8c852','User.4',32],['#c2c2c2','User.5',32],['#5994dc','User.6',32],['#b4dbd2','User.7',32],['#d8c852','User.8',32],['#e8b2a7','User.9',32]];
el('side-panel',`:host{display:flex;flex-direction:column;width:184px;flex:none;border-left:4px solid #dcdcdc;background:#f0f0f0;height:909px}
h3{margin:0;font:inherit;background:#b6b6b6;height:21px;padding:2px 0 0 3px}
.tabs{display:flex;height:23px;margin-top:5px;align-items:flex-end;padding-left:1px}.tab{border:1px solid #d9d9d9;border-bottom:0;height:20px;padding:1px 4px 0}.on{background:#fff;height:23px;padding:3px 10px 0 7px;border:0}
.box{background:#fff;width:178px;height:636px;padding:2px 3px 0 4px;border-bottom:1px solid #d9d9d9;border-right:1px solid #d9d9d9;margin-left:0}.list{background:#f0f0f0;height:608px}
.opt{color:#6d6d6d;padding:4px 0 0 10px;display:flex;align-items:center;gap:2px}.opt i{border:4px solid transparent;border-left:5px solid #555;border-right:0}
.pre{padding:12px 7px 0}.pre fit-text{display:block}.pre win-select{width:166px;margin-bottom:3px}
h3.f{margin-top:7px;box-shadow:0 -4px #dcdcdc}
.fl{display:grid;grid-template-columns:92px 1fr;grid-auto-rows:15px;padding:5px 0 0 5px;align-items:center}`,
()=>`<h3><fit-text w="63">Appearance</fit-text></h3><div class="tabs"><div class="tab on"><fit-text w="33">Layers</fit-text></div><div class="tab"><fit-text w="39">Objects</fit-text></div></div>
<div class="box"><div class="list">${LAY.map(([c,t,w])=>`<layer-row c="${c}" t="${t}" w="${w}" ${t==='F.Silkscreen'?'sel':''} ${t==='Inner layers'?'dim':''}></layer-row>`).join('')}</div><div class="opt"><i></i><fit-text w="111">Layer Display Options</fit-text></div></div>
<div class="pre"><fit-text w="91">Presets (Ctrl+Tab):</fit-text><win-select style="margin-top:1px"><fit-text w="50">All Layers</fit-text></win-select><fit-text w="91">Presets (Ctrl+Tab):</fit-text><win-select style="margin-top:1px"><fit-text w="15">---</fit-text></win-select></div>
<h3 class="f"><fit-text w="78">Selection Filter</fit-text></h3>
<div class="fl">${[['All items',43,1],['Locked items',65,0],['Footprints',54,1],['Text',20,1],['Tracks',31,1],['Vias',21,1],['Pads',24,1],['Graphics',45,1],['Zones',31,1],['Rule Areas',54,1],['Dimensions',60,1],['Other items',60,1]].map(([t,w,o])=>`<win-check ${o?'on':''}><fit-text w="${w}">${t}</fit-text></win-check>`).join('')}</div>`);

el('title-bar',':host{display:flex;height:24px;background:#fff;align-items:center;color:#8a8a8a;padding-left:3px}kc-icon{width:15px;height:15px;margin-right:5px;margin-top:-3px}svg{width:110px;height:11px;margin:-5px 19px 0 auto}',`<kc-icon name="app"></kc-icon><fit-text w="404">J1 [from U37AX_USB_PowerDelivery_TestBoard.kicad_pcb] — Footprint Editor</fit-text><svg viewBox="0 0 110 11" fill="none" stroke="#8a8a8a"><path d="M8 6.500h10M54.500 3.500h7v7h-7zM56.500 3V1.500h7v7H62M100 1l9.500 9.500M109.500 1l-9.500 9.500"/></svg>`);
el('menu-bar',':host{display:flex;height:17px;background:#fff;gap:14px;padding:1px 0 0 7px;color:#6d6d6d}',[['File',18],['Edit',20],['View',25],['Place',28],['Inspect',38],['Tools',27],['Preferences',61],['Help',25]].map(([t,w])=>`<fit-text w="${w}">${t}</fit-text>`).join(''));
el('tool-bar',':host{display:flex;height:36px;background:#f0f0f0;align-items:center;padding:2px 0 0 4px}.s{width:35.500px;display:flex;justify-content:flex-end}i{width:13px;height:14px;border:1px solid #000;background:#f2eda1}.w{background:#fff;border-color:#7a7a7a;height:22px;margin-top:-2px;padding-left:6px}tool-sep{width:1px}tool-sep.m{width:8px}',
()=>'newfp lib save | print | undo redo | refresh zin zout zfit zsel | rotl rotr mirh mirv grp ungrp | fpprop padprop drc | pcb'.split(' ').map(n=>n==='|'?'<tool-sep class="m"></tool-sep>':`<tool-btn icon="${n}"></tool-btn>`).join('')+`<span class="s"><tool-sep></tool-sep></span><win-select style="width:167px;margin-left:5px"><fit-text w="115">0,1000 mm (3,94 mils)</fit-text></win-select><tool-sep style="margin:0 5px 0 4px"></tool-sep><win-select style="width:96px"><fit-text w="62">Zoom 35,00</fit-text></win-select><tool-sep style="margin:0 5px 0 4px"></tool-sep><win-select class="w" style="width:137px"><i></i><fit-text w="60" style="margin-left:-3px">F.Silkscreen</fit-text></win-select>`);
el('info-bar',':host{display:flex;height:31px;background:#ffffe1;border-bottom:1px solid #8d8d80;align-items:center;padding:0 4px 0 5px;justify-content:space-between;border-right:2px solid #dcdcdc}div{display:flex;align-items:center;gap:5px}svg{width:16px;height:16px}svg.x{margin-top:-1px}',`<div><svg viewBox="0 0 16 16"><circle cx="8" cy="8" r="7.500" fill="#0078d7" stroke="#0a5ea8"/><path d="M8 6.500V12" stroke="#fff" stroke-width="1.800"/><circle cx="8" cy="4.300" r="1.100" fill="#fff"/></svg><fit-text w="301">Editing J1 from board.  Saving will update the board only.</fit-text></div><svg class="x" viewBox="0 0 16 16"><rect x=".7" y=".7" width="14.600" height="14.600" rx="1" fill="#d98b7c" stroke="#4a1420" stroke-width="1.300"/><path d="M4.500 4.500l7 7M11.500 4.500l-7 7" stroke="#4a1420" stroke-width="3.600"/><path d="M4.500 4.500l7 7M11.500 4.500l-7 7" stroke="#fff" stroke-width="2"/></svg>`);
el('msg-panel',':host{display:grid;grid-template-columns:49px 81px 165px 57px 58px 87px 87px 60px;height:32px;border-top:1px solid #d9d9d9;border-bottom:1px solid #d9d9d9;padding:0 0 0 11px;color:#6f6f6f;grid-auto-rows:15px;line-height:15px;background:#f0f0f0}',[['Pad',20],['Pin Name',52],['Pin Type',45],['Layer',28],['Rect',23],['Width',32],['Height',36],['Rotation',45],['B8',13],['SBU2',27],['bidirectional+no_connect',136],['F.Cu',24],['Conn',28],['0,3000 mm',58],['1,1000 mm',58],['0',6]].map(([t,w])=>`<fit-text w="${w}">${t}</fit-text>`).join(''));
el('status-bar',':host{display:flex;height:22px;background:#f0f0f0;padding:1px 0}div{border-left:1px solid #d4d4d4;padding:3px 0 0 5px;flex:none}','<div style="width:849px;border:0"></div><div style="width:78px"><fit-text w="37">Z 28,46</fit-text></div><div style="width:160px"><fit-text w="102">X -1,8000  Y -5,2000</fit-text></div><div style="width:251px"><fit-text w="175">dx -1,8000  dy -5,2000  dist 5,5027</fit-text></div><div style="width:184px"><fit-text w="57">grid 0,1000</fit-text></div><div style="width:66px"><fit-text w="21">mm</fit-text></div><div style="width:173px"></div><div></div>');
el('task-bar',`:host{display:flex;height:40px;background:linear-gradient(90deg,#262728 0,#2a2727 38%,#3a2024 50%,#471e23 66%,#471e22 100%);color:#fff}
.c{width:49px;flex:none;display:flex;align-items:center;justify-content:center;position:relative}.c.u::after{content:"";position:absolute;left:4px;right:4px;bottom:0;height:2px;background:#76b9ed}.c.a{background:linear-gradient(90deg,#75494d 0,#75494d 44px,#5a3539 44px);width:48px}.c.a::after{left:0;right:0}
.t{display:flex;align-items:center;margin-left:30px;flex:1}.clk{display:flex;flex-direction:column;align-items:center;line-height:18px;margin-left:6.500px;width:66px}.e{width:1px;height:40px;background:#8a6a6d;margin-left:19px}`,
`<div class="c" style="width:50.500px;padding-right:3px"><kc-icon name="win" style="width:20px;height:20px"></kc-icon></div>${'expl winamp cloud keep chipq mpc eclipse cube putty rdp npp lime tv prg vsc lxi cpu conn treei wrench obs pdf sync gh bee brave green sat term view ut chrome ki'.split(' ').map(n=>`<div class="c ${/^(expl|view|ut|chrome|ki)$/.test(n)?'u':''} ${n==='ki'?'a':''}"><kc-icon name="${n}"></kc-icon></div>`).join('')}
<div class="t"><svg width="70" height="20" viewBox="0 0 70 20" fill="none" stroke="#fff" stroke-width="1.200"><path d="M3 13l5.500-5.500L14 13M25 8h2.500l4-4v12l-4-4H25zM33.500 7.500q2 2.500 0 5M36 5.500q3.500 4.500 0 9M38.500 4q5 6 0 12"/><path d="M52 16q2-11 12-12M55 16q2-7 9-8M58.500 16q1-4 5.500-4" stroke="#a98f91"/><path d="M61.500 16.500q.5-2 2.500-2v2z" fill="#fff"/></svg><fit-text w="23" style="margin-left:5px">ENG</fit-text><div class="clk"><fit-text w="28">22:09</fit-text><fit-text w="55">24.06.2024</fit-text></div><svg width="17" height="20" viewBox="0 0 17 20" style="margin-left:12px" fill="none" stroke="#fff" stroke-width="1.200"><path d="M.7 2.700h15.600v12H11l-2.500 3-2.500-3H.7z"/></svg><div class="e"></div></div>`);
el('fp-app',`:host{display:flex;flex-direction:column;width:1920px;height:1080px;overflow:hidden;position:relative}.mid{display:flex;height:909px;background:#f0f0f0}.cv{flex:1;display:flex;flex-direction:column;min-width:0;overflow:hidden}`,
`<title-bar></title-bar><menu-bar></menu-bar><tool-bar></tool-bar>
<div class="mid"><tool-strip items="grid* lock polar in mil mm* full | ang | padsk gfxsk txtsk contrast | tree layers* tools"></tool-strip><div class="cv"><info-bar></info-bar><pcb-canvas></pcb-canvas></div><tool-strip items="arrow* | pad hatch | line arc rect circ poly img txt tbox dim+ del | orig gorig ruler"></tool-strip><side-panel></side-panel></div>
<msg-panel></msg-panel><status-bar></status-bar><task-bar></task-bar><pad-dialog></pad-dialog>`);
</script>
</body>
</html>
